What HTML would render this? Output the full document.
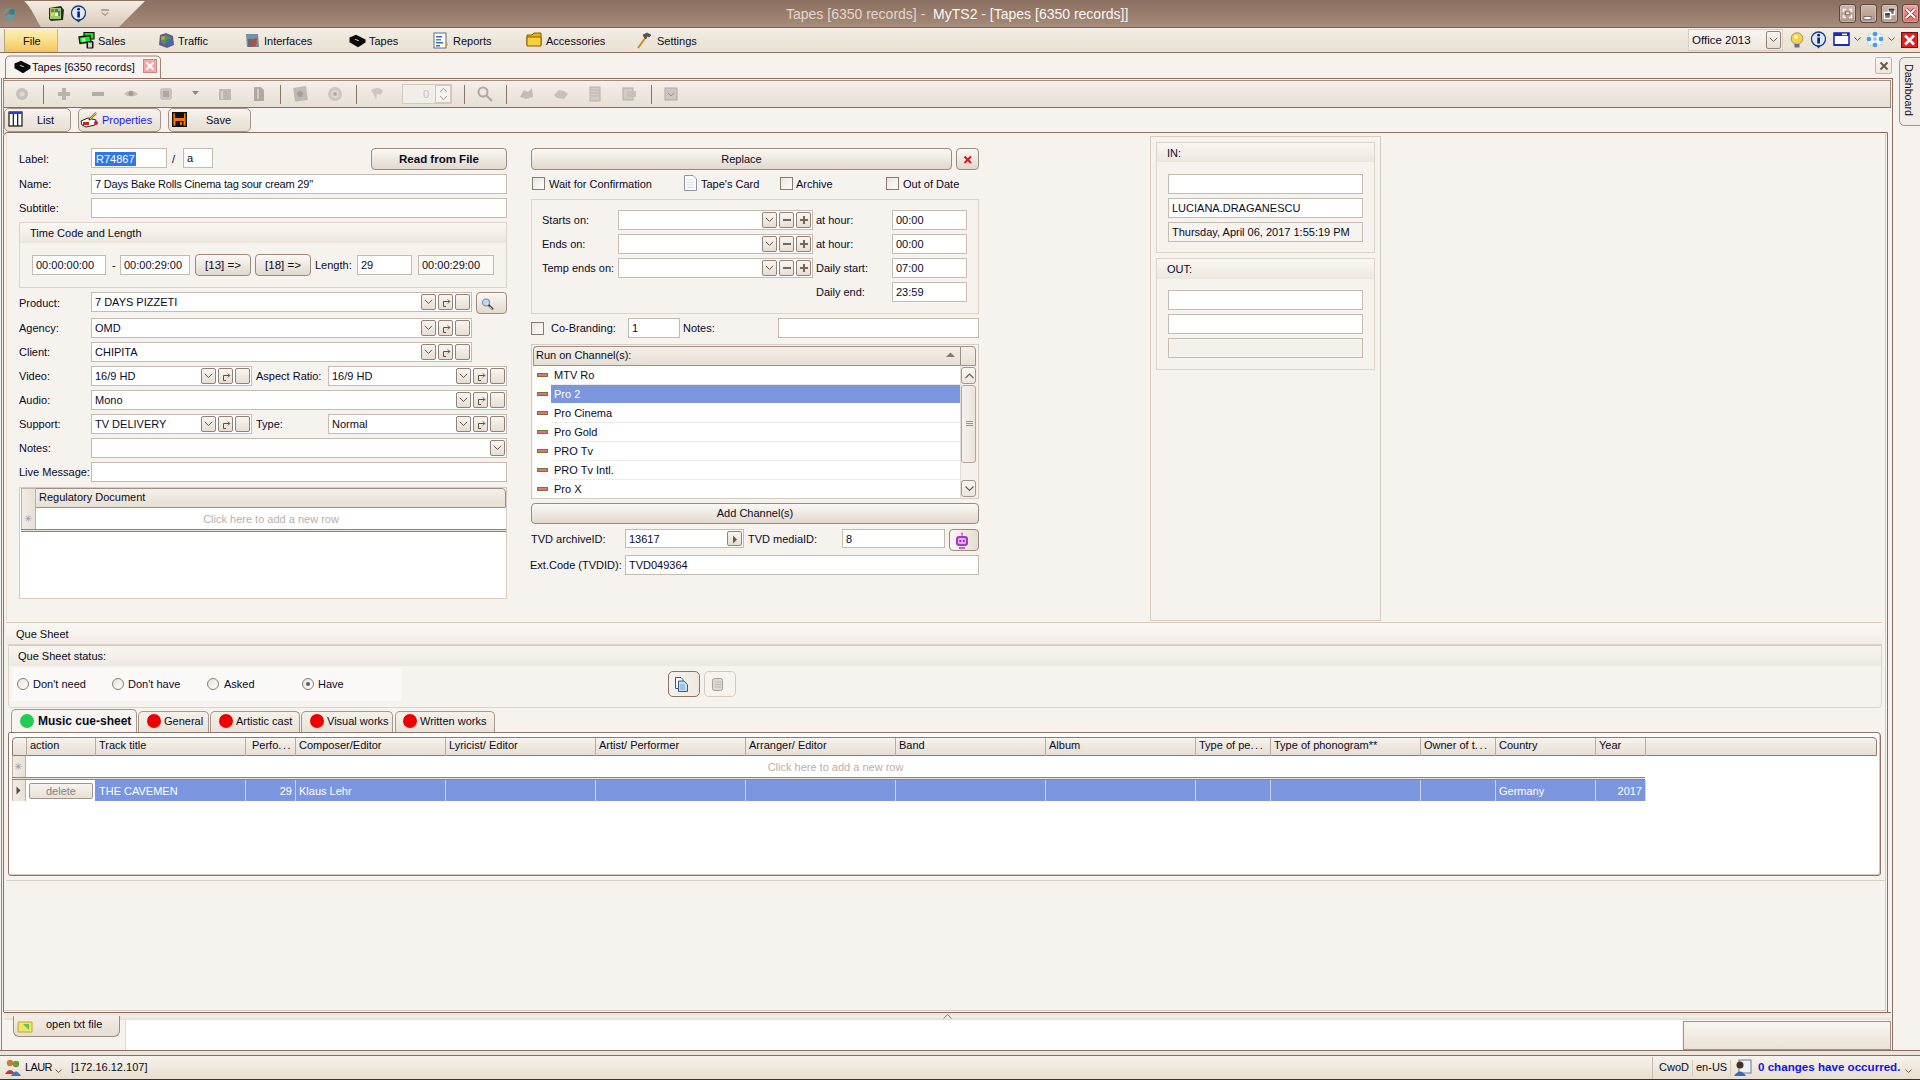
<!DOCTYPE html><html><head><meta charset="utf-8"><style>
html,body{margin:0;padding:0}
body{width:1920px;height:1080px;position:relative;overflow:hidden;background:#F6F2EE;font-family:"Liberation Sans",sans-serif;font-size:11px;color:#0a0a1e}
.a{position:absolute;box-sizing:border-box}
.t{white-space:nowrap;line-height:14px}
.inp{border:1px solid #c4bbb2;background:#fff}
.sb{border:1px solid #938279;border-radius:2px;background:linear-gradient(#f8f5f1,#e6ded4)}
.btn{border:1px solid #9c8a7e;border-radius:4px;background:linear-gradient(#fbf9f6,#ebe5dc 60%,#e2d9ce)}
.line{background:#8c6e5f}
.hdr{background:linear-gradient(#f3eee8,#e8e0d6);border:1px solid #a49183}
.grp{border:1px solid #dcd4cb}
.gh{background:linear-gradient(#faf7f3,#ece6de)}
.cb{border:1px solid #8a7b72;background:linear-gradient(135deg,#e9e4dc,#fff)}
</style></head><body>
<div class="a " style="left:0px;top:0px;width:1920px;height:28px;background:linear-gradient(#8b6f60,#9a7e6e 55%,#a88c7c);"></div>
<svg class="a" style="left:0;top:0" width="160" height="28"><defs><linearGradient id="qa" x1="0" y1="0" x2="0" y2="1"><stop offset="0" stop-color="#f4ece2"/><stop offset="1" stop-color="#d9cbbb"/></linearGradient></defs>
<path d="M24 1 H145 L119 27 H41 C36 20 32 8 24 1 Z" fill="url(#qa)"/></svg>
<svg class="a" style="left:1px;top:4px" width="16" height="20" viewBox="0 0 16 20"><circle cx="8" cy="10" r="6" fill="#5aa0a8" opacity=".8"/><path d="M3 12 L9 6 L10 9 Z" fill="#e04a2a"/><circle cx="11" cy="8" r="3" fill="#3d7d8a"/></svg>
<svg class="a" style="left:48px;top:5px" width="17" height="17" viewBox="0 0 17 17"><path d="M1 3 L13 1 L16 5 L15 15 L3 16 L1 14Z" fill="#2b2b2b"/><rect x="2" y="3" width="11" height="11" fill="#9ec96a"/><rect x="3" y="4" width="3" height="3" fill="#e24a4a"/><rect x="7" y="4" width="3" height="3" fill="#3a72c8"/><rect x="3" y="8" width="3" height="3" fill="#e5d34a"/><rect x="7" y="8" width="3" height="3" fill="#fff"/><rect x="10" y="6" width="2" height="5" fill="#4a8a3a"/></svg>
<svg class="a" style="left:70px;top:5px" width="17" height="18" viewBox="0 0 17 18"><circle cx="8.5" cy="8" r="7" fill="#dfe9f7" stroke="#1d3a8a" stroke-width="1.3"/><path d="M6 15 L8.5 17.5 L11 15" fill="#1d3a8a"/><rect x="7.3" y="6.5" width="2.6" height="6" fill="#0a1e7a"/><circle cx="8.6" cy="4.2" r="1.4" fill="#0a1e7a"/></svg>
<svg class="a" style="left:100px;top:9px" width="10" height="8" viewBox="0 0 10 8"><path d="M1 1 H9" stroke="#7a6a60" stroke-width="1"/><path d="M2 3.5 L5 6.5 L8 3.5" fill="none" stroke="#7a6a60" stroke-width="1"/></svg>
<div class="a t" style="left:786px;top:5px;font-size:14px;line-height:18px;color:#efe6df;letter-spacing:0px"><span style="color:#e3d6cc">Tapes [6350 records] - </span>&nbsp;<span style="color:#fbf7f3">MyTS2 - [Tapes [6350 records]]</span></div>
<div class="a " style="left:1839px;top:4px;width:17px;height:19px;border:1px solid #5e463c;border-radius:3px;background:linear-gradient(#cbb5aa,#b09688);box-shadow:inset 0 0 0 1px rgba(255,255,255,.25);"></div>
<div class="a " style="left:1860px;top:4px;width:17px;height:19px;border:1px solid #5e463c;border-radius:3px;background:linear-gradient(#cbb5aa,#b09688);box-shadow:inset 0 0 0 1px rgba(255,255,255,.25);"></div>
<div class="a " style="left:1881px;top:4px;width:17px;height:19px;border:1px solid #5e463c;border-radius:3px;background:linear-gradient(#cbb5aa,#b09688);box-shadow:inset 0 0 0 1px rgba(255,255,255,.25);"></div>
<div class="a " style="left:1902px;top:4px;width:17px;height:19px;border:1px solid #5e463c;border-radius:3px;background:linear-gradient(#f4a0a0,#e86a6a);box-shadow:inset 0 0 0 1px rgba(255,255,255,.25);"></div>
<svg class="a" style="left:1839px;top:4px" width="17" height="19"><path d="M4.5 8 V5.5 H7 M10 5.5 H12.5 V8 M12.5 11 V13.5 H10 M7 13.5 H4.5 V11" fill="none" stroke="#fff" stroke-width="1.5"/><rect x="6.5" y="8" width="4" height="2.5" fill="#fff" stroke="#4a3a32" stroke-width=".6"/></svg>
<svg class="a" style="left:1860px;top:4px" width="17" height="19"><rect x="4" y="12.5" width="7" height="3" fill="#fff" stroke="#4a3a32" stroke-width=".6"/></svg>
<svg class="a" style="left:1881px;top:4px" width="17" height="19"><rect x="7.5" y="4.5" width="6" height="6" fill="#8a7064" stroke="#fff" stroke-width="1.4"/><rect x="7.5" y="4.5" width="6" height="2" fill="#4a3a32"/><rect x="3.5" y="8.5" width="6" height="6" fill="#8a7064" stroke="#fff" stroke-width="1.4"/><rect x="4.2" y="9.2" width="4.6" height="2" fill="#4a3a32"/></svg>
<svg class="a" style="left:1902px;top:4px" width="17" height="19"><path d="M4 5 L13 14 M13 5 L4 14" stroke="#7a2a2a" stroke-width="3.6"/><path d="M4 5 L13 14 M13 5 L4 14" stroke="#fff" stroke-width="2.2"/></svg>
<div class="a " style="left:0px;top:27px;width:1920px;height:1px;background:#7e6456;"></div>
<div class="a " style="left:0px;top:28px;width:1920px;height:24px;background:linear-gradient(#f3efe7,#ece6da 50%,#e9e3d5);"></div>
<div class="a " style="left:0px;top:52px;width:1920px;height:1px;background:#8c6e5f;"></div>
<div class="a " style="left:4px;top:29px;width:54px;height:23px;background:linear-gradient(#fdf0b8,#f9dc86 55%,#f4c25a);border-left:1px solid #b8a080;border-right:1px solid #c9b391;"></div>
<div class="a t " style="left:23px;top:34px;">File</div>
<div class="a" style="left:78px;top:32px;line-height:0"><svg width="17" height="17" viewBox="0 0 17 17"><path d="M6 0.5 H16 V7 H6Z" fill="#22dd22" stroke="#111" stroke-width="1.2"/><path d="M1 5 L12 3.5 L13 10 L2 11.5Z" fill="#11ee11" stroke="#111" stroke-width="1.3"/><path d="M3.5 6.5 L7 6 L7.5 9 L4 9.5Z" fill="#aef0ae"/><rect x="8.5" y="9" width="7" height="7.5" rx="1" fill="#111"/><rect x="10" y="10.5" width="4" height="5" fill="#cfcfcf"/></svg></div>
<div class="a t " style="left:98px;top:34px;">Sales</div>
<div class="a" style="left:158px;top:32px;line-height:0"><svg width="17" height="17" viewBox="0 0 17 17"><path d="M2 3 L8 1 L15 4 L16 13 L9 16 L1 13Z" fill="#6a5a8a"/><path d="M3 5 L8 3 L13 6 L12 10 L6 12 L3 10Z" fill="#4f9a4a"/><circle cx="11" cy="10" r="3" fill="#3e6fb0"/><circle cx="5" cy="6" r="2" fill="#c9a040"/></svg></div>
<div class="a t " style="left:178px;top:34px;">Traffic</div>
<div class="a" style="left:244px;top:32px;line-height:0"><svg width="17" height="17" viewBox="0 0 17 17"><path d="M2 2 H14 L15 15 H3Z" fill="#7a8a9a"/><rect x="3" y="3" width="10" height="3" fill="#5a9ac8"/><path d="M6 8 L13 6 L12 14 L7 15Z" fill="#b05040"/><path d="M4 7 L8 7 L8 15 L4 15Z" fill="#6a6a6a"/></svg></div>
<div class="a t " style="left:264px;top:34px;">Interfaces</div>
<div class="a" style="left:349px;top:34px;line-height:0"><svg width="17" height="14" viewBox="0 0 17 14"><path d="M0.5 3.5 L7 0.8 L16.5 5.5 L16.5 8.5 L9 13.2 L0.5 8.2 Z" fill="#080808"/><path d="M6 5 L10 6.3 L9.3 7 L5.5 5.6Z" fill="#f4f4f4"/></svg></div>
<div class="a t " style="left:369px;top:34px;">Tapes</div>
<div class="a" style="left:433px;top:32px;line-height:0"><svg width="16" height="17" viewBox="0 0 16 17"><rect x="1" y="1" width="12" height="15" fill="#fff" stroke="#5a6a8a"/><rect x="3" y="4" width="6" height="1.5" fill="#3a6ab0"/><rect x="3" y="7" width="5" height="1.5" fill="#3aa050"/><rect x="3" y="10" width="7" height="1.5" fill="#3a6ab0"/><rect x="3" y="13" width="4" height="1.5" fill="#3a6ab0"/><path d="M12 9 L15 12 L13 16Z" fill="#d0a030"/></svg></div>
<div class="a t " style="left:453px;top:34px;">Reports</div>
<div class="a" style="left:526px;top:32px;line-height:0"><svg width="17" height="15" viewBox="0 0 17 15"><path d="M1 3 H6 L8 1 H15 V13 H1Z" fill="#e8b400" stroke="#8a5a00"/><path d="M1 5 H15 V14 H1Z" fill="#f7d23a" stroke="#8a5a00"/></svg></div>
<div class="a t " style="left:546px;top:34px;">Accessories</div>
<div class="a" style="left:636px;top:32px;line-height:0"><svg width="17" height="17" viewBox="0 0 17 17"><path d="M2 16 L10 5" stroke="#d08a2a" stroke-width="2"/><path d="M7 3 L11 1 L15 3 L13 5 L11 4 L10 7 L8 5Z" fill="#555" stroke="#333" stroke-width=".6"/></svg></div>
<div class="a t " style="left:657px;top:34px;">Settings</div>
<div class="a " style="left:1688px;top:29px;width:95px;height:22px;border:1px solid #d7cdc2;background:linear-gradient(#f7f4ee,#efe9df);"></div>
<div class="a t " style="left:1692px;top:33px;font-size:11.5px;">Office 2013</div>
<div class="a sb" style="left:1766px;top:31px;width:15px;height:18px;"><div style="position:absolute;left:2px;top:5px;line-height:0"><svg width="9" height="6" viewBox="0 0 9 6"><path d="M0.8 0.8 L4.5 4.5 L8.2 0.8" fill="none" stroke="#6b5a50" stroke-width="1"/></svg></div></div>
<svg class="a" style="left:1790px;top:32px" width="14" height="17" viewBox="0 0 14 17"><circle cx="7" cy="6.5" r="5.8" fill="#f2d34a" stroke="#9a8040" stroke-width=".8"/><circle cx="6" cy="5" r="2" fill="#fff6c0"/><rect x="4.5" y="12" width="5" height="3.5" fill="#6a6a9a"/></svg>
<svg class="a" style="left:1810px;top:31px" width="17" height="18" viewBox="0 0 17 18"><circle cx="8.5" cy="8" r="7" fill="#dfe9f7" stroke="#1d3a8a" stroke-width="1.3"/><path d="M6 14.5 L8.5 17.5 L11 14.5" fill="#1d3a8a"/><rect x="7.3" y="6.5" width="2.6" height="6" fill="#0a1e7a"/><circle cx="8.6" cy="4.2" r="1.4" fill="#0a1e7a"/></svg>
<svg class="a" style="left:1833px;top:32px" width="17" height="15" viewBox="0 0 17 15"><rect x="1" y="1" width="15" height="12" fill="#fff" stroke="#1a2ab8" stroke-width="1.6"/><rect x="1" y="1" width="15" height="3" fill="#1a2ab8"/><rect x="9" y="1.6" width="5" height="1.6" fill="#fff"/><rect x="1" y="12" width="15" height="2" fill="#1a2ab8"/></svg>
<svg class="a" style="left:1854px;top:37px" width="7" height="5"><path d="M.5 .5 L3.5 3.5 L6.5 .5" fill="none" stroke="#6b5a50"/></svg>
<svg class="a" style="left:1866px;top:31px" width="18" height="17" viewBox="0 0 18 17"><rect x="2" y="3" width="14" height="11" fill="#eef4fb" stroke="#9ab" stroke-width=".6" stroke-dasharray="1 1"/><circle cx="9" cy="3" r="2.3" fill="#4a9ae0"/><circle cx="3" cy="8" r="2.3" fill="#4a9ae0"/><circle cx="15" cy="8" r="2.3" fill="#4a9ae0"/><circle cx="9" cy="14" r="2.3" fill="#4a9ae0"/><circle cx="9" cy="8" r="1.8" fill="#8ac0f0"/></svg>
<svg class="a" style="left:1888px;top:37px" width="7" height="5"><path d="M.5 .5 L3.5 3.5 L6.5 .5" fill="none" stroke="#6b5a50"/></svg>
<svg class="a" style="left:1901px;top:32px" width="17" height="16" viewBox="0 0 17 16"><rect x=".5" y=".5" width="16" height="15" fill="#e02020" stroke="#701010"/><path d="M4 3.5 L13 12.5 M13 3.5 L4 12.5" stroke="#fff" stroke-width="2.6"/></svg>
<svg class="a" style="left:0;top:53px" width="170" height="27"><path d="M5.5 26 V8 Q5.5 3 10 3 H156 Q160.5 3 160.5 7 V26" fill="#f7f4f0" stroke="#9b8174" stroke-width="1"/></svg>
<div class="a" style="left:14px;top:60px;line-height:0"><svg width="17" height="14" viewBox="0 0 17 14"><path d="M0.5 3.5 L7 0.8 L16.5 5.5 L16.5 8.5 L9 13.2 L0.5 8.2 Z" fill="#080808"/><path d="M6 5 L10 6.3 L9.3 7 L5.5 5.6Z" fill="#f4f4f4"/></svg></div>
<div class="a t " style="left:32px;top:60px;">Tapes [6350 records]</div>
<svg class="a" style="left:143px;top:59px" width="15" height="15" viewBox="0 0 15 15"><rect x=".5" y=".5" width="13" height="13" fill="#f0a8a8" stroke="#c88"/><path d="M3.5 3.5 L10.5 10.5 M10.5 3.5 L3.5 10.5" stroke="#fff" stroke-width="2"/></svg>
<div class="a " style="left:1875px;top:57px;width:17px;height:17px;border:1px solid #c4b6ab;border-radius:2px;background:linear-gradient(#f9f6f2,#ece6de);"><svg style="position:absolute;left:3px;top:3px" width="10" height="10"><path d="M1.5 1.5 L8.5 8.5 M8.5 1.5 L1.5 8.5" stroke="#6a5a52" stroke-width="2"/></svg></div>
<svg class="a" style="left:1898px;top:57px" width="22" height="70"><path d="M22 .5 H7 Q1.5 .5 1.5 6 V63 Q1.5 68.5 7 68.5 H22" fill="#f1ece5" stroke="#a89588"/></svg>
<div class="a t" style="left:1902px;top:64px;width:14px;height:54px;"><div style="position:absolute;left:14px;top:0;transform-origin:0 0;transform:rotate(90deg);font-size:10.6px;line-height:14px">Dashboard</div></div>
<div class="a " style="left:1px;top:78px;width:1px;height:975px;background:#9b8174;"></div>
<div class="a " style="left:3px;top:79px;width:1px;height:55px;background:#9b8174;"></div>
<div class="a " style="left:3px;top:78px;width:1890px;height:1px;background:#8c6e5f;"></div>
<div class="a " style="left:1892px;top:78px;width:1px;height:973px;background:#8c6e5f;"></div>
<div class="a " style="left:1890px;top:79px;width:2px;height:972px;background:#f6f2ee;"></div>
<div class="a " style="left:4px;top:80px;width:1887px;height:27px;background:linear-gradient(#f4f0e9,#ede7dd 50%,#e6dfd3);border-top:1px solid #a38c7f;border-right:1px solid #a38c7f;"></div>
<div class="a " style="left:4px;top:107px;width:1887px;height:1px;background:#8c6e5f;"></div>
<div class="a " style="left:43px;top:85px;width:1px;height:19px;background:#8a7466;"></div>
<div class="a " style="left:280px;top:85px;width:1px;height:19px;background:#8a7466;"></div>
<div class="a " style="left:356px;top:85px;width:1px;height:19px;background:#8a7466;"></div>
<div class="a " style="left:464px;top:85px;width:1px;height:19px;background:#8a7466;"></div>
<div class="a " style="left:506px;top:85px;width:1px;height:19px;background:#8a7466;"></div>
<div class="a " style="left:651px;top:85px;width:1px;height:19px;background:#8a7466;"></div>
<svg class="a" style="left:13px;top:85px" width="18" height="18" viewBox="0 0 18 18" opacity="0.9"><circle cx="9" cy="9" r="6" fill="#c2bcb6"/><circle cx="9" cy="9" r="2.5" fill="#ddd8d2"/></svg>
<svg class="a" style="left:55px;top:85px" width="18" height="18" viewBox="0 0 18 18" opacity="0.9"><rect x="7" y="3" width="4" height="12" fill="#b5aea8"/><rect x="3" y="7" width="12" height="4" fill="#b5aea8"/></svg>
<svg class="a" style="left:89px;top:85px" width="18" height="18" viewBox="0 0 18 18" opacity="0.9"><rect x="3" y="7" width="12" height="4" fill="#ada6a0"/></svg>
<svg class="a" style="left:122px;top:85px" width="18" height="18" viewBox="0 0 18 18" opacity="0.9"><path d="M2 9 Q9 2 16 9 Q9 14 2 9Z" fill="#c0bab4"/><circle cx="9" cy="8.5" r="2.5" fill="#9a948e"/></svg>
<svg class="a" style="left:157px;top:85px" width="18" height="18" viewBox="0 0 18 18" opacity="0.9"><rect x="3" y="3" width="12" height="12" rx="3" fill="#c7c1bb"/><rect x="6" y="6" width="6" height="6" fill="#a8a29c"/></svg>
<svg class="a" style="left:192px;top:91px" width="7" height="5"><path d="M0 0 H7 L3.5 4Z" fill="#8e857e"/></svg>
<svg class="a" style="left:216px;top:85px" width="18" height="18" viewBox="0 0 18 18" opacity="0.9"><rect x="3" y="4" width="12" height="11" fill="#b9b3ad"/><rect x="5" y="6" width="2" height="8" fill="#d6d0ca"/></svg>
<svg class="a" style="left:250px;top:85px" width="18" height="18" viewBox="0 0 18 18" opacity="0.9"><path d="M4 2 H11 L14 5 V16 H4Z" fill="#aaa39d"/><rect x="7" y="4" width="2" height="10" fill="#cfc9c3"/></svg>
<svg class="a" style="left:291px;top:85px" width="18" height="18" viewBox="0 0 18 18" opacity="0.9"><rect x="3" y="2" width="13" height="14" fill="#bbb5af" transform="rotate(-8 9 9)"/><circle cx="9" cy="9" r="3" fill="#9e9892"/></svg>
<svg class="a" style="left:326px;top:85px" width="18" height="18" viewBox="0 0 18 18" opacity="0.9"><circle cx="9" cy="9" r="7" fill="#c9c3bd"/><circle cx="9" cy="9" r="4" fill="#dcd6d0"/><circle cx="9" cy="9" r="2" fill="#aca6a0"/></svg>
<svg class="a" style="left:368px;top:85px" width="18" height="18" viewBox="0 0 18 18" opacity="0.9"><path d="M3 5 Q9 1 15 5 L13 10 L9 9 L8 15 L6 10Z" fill="#cbc5bf"/></svg>
<div class="a " style="left:402px;top:84px;width:50px;height:20px;border:1px solid #d3c8bd;background:#f1ede7;"></div>
<div class="a t " style="left:423px;top:87px;color:#cdc4bc;">0</div>
<div class="a " style="left:435px;top:85px;width:16px;height:18px;border:1px solid #d3c8bd;background:#f7f4f0;"></div>
<svg class="a" style="left:439px;top:87px" width="9" height="15"><path d="M1 5 L4.5 1.5 L8 5" fill="none" stroke="#a2968c"/><path d="M1 9 L4.5 12.5 L8 9" fill="none" stroke="#a2968c"/></svg>
<svg class="a" style="left:476px;top:85px" width="18" height="18" viewBox="0 0 18 18" opacity="0.9"><circle cx="7" cy="7" r="4.5" fill="none" stroke="#aaa39d" stroke-width="2"/><path d="M10 10 L16 16" stroke="#aaa39d" stroke-width="2.2"/></svg>
<svg class="a" style="left:518px;top:85px" width="18" height="18" viewBox="0 0 18 18" opacity="0.9"><path d="M2 12 L6 5 L10 7 L14 3 L15 12 L8 14Z" fill="#bfb9b3"/></svg>
<svg class="a" style="left:552px;top:85px" width="18" height="18" viewBox="0 0 18 18" opacity="0.9"><path d="M2 10 L7 5 L12 6 L16 9 L12 14 L5 13Z" fill="#c4beb8"/></svg>
<svg class="a" style="left:586px;top:85px" width="18" height="18" viewBox="0 0 18 18" opacity="0.9"><rect x="4" y="2" width="10" height="14" fill="#d0cac4" stroke="#b0aaa4"/><path d="M5 5 H13 M5 8 H13 M5 11 H13" stroke="#b7b1ab"/></svg>
<svg class="a" style="left:620px;top:85px" width="18" height="18" viewBox="0 0 18 18" opacity="0.9"><rect x="3" y="3" width="10" height="12" fill="#cfc9c3" stroke="#aea8a2"/><rect x="7" y="6" width="9" height="6" fill="#c3bdb7"/></svg>
<svg class="a" style="left:662px;top:85px" width="18" height="18" viewBox="0 0 18 18" opacity="0.9"><rect x="3" y="3" width="12" height="12" fill="#c9c3bd" stroke="#a9a39d"/><path d="M6 8 L9 11 L12 8" fill="none" stroke="#8f8983"/></svg>
<div class="a " style="left:4px;top:108px;width:1886px;height:24px;background:#f6f2ee;"></div>
<div class="a " style="left:4px;top:108px;width:67px;height:24px;border:1px solid #a59186;border-radius:5px;background:linear-gradient(#f7f3ee,#ede7de 50%,#e7e0d5);"></div>
<div class="a " style="left:78px;top:108px;width:83px;height:24px;border:1px solid #a59186;border-radius:5px;background:linear-gradient(#f7f3ee,#ede7de 50%,#e7e0d5);"></div>
<div class="a " style="left:168px;top:108px;width:83px;height:24px;border:1px solid #a59186;border-radius:5px;background:linear-gradient(#f7f3ee,#ede7de 50%,#e7e0d5);"></div>
<svg class="a" style="left:8px;top:111px" width="15" height="16" viewBox="0 0 15 16"><rect x="1" y="1" width="13" height="14" fill="#fff" stroke="#111" stroke-width="1.2"/><rect x="1" y="1" width="13" height="2" fill="#2a3ae0"/><path d="M5.3 3 V15 M9.7 3 V15" stroke="#111" stroke-width="1.2"/></svg>
<div class="a t " style="left:37px;top:113px;">List</div>
<svg class="a" style="left:80px;top:111px" width="19" height="17" viewBox="0 0 19 17"><path d="M1 10 L8 7 L16 9 L15 14 L6 16 L2 14Z" fill="#fff" stroke="#222"/><rect x="3" y="11" width="6" height="3" fill="#d02020"/><path d="M9 9 L16 2" stroke="#333" stroke-width="2.2"/><path d="M10 8 L16 2" stroke="#f2c020" stroke-width="1.2"/><circle cx="16" cy="12" r="2" fill="#d02020"/></svg>
<div class="a t " style="left:102px;top:113px;color:#1a1af0;">Properties</div>
<svg class="a" style="left:172px;top:112px" width="15" height="15" viewBox="0 0 15 15"><rect x=".7" y=".7" width="13.6" height="13.6" fill="#f07a10" stroke="#111" stroke-width="1.4"/><rect x="3" y="1" width="9" height="5" fill="#111"/><rect x="3.5" y="9" width="8" height="5" fill="#111"/><rect x="8" y="10" width="2" height="3" fill="#f07a10"/></svg>
<div class="a t " style="left:206px;top:113px;">Save</div>
<svg class="a" style="left:0;top:131px" width="1892" height="882"><path d="M3.5 881 V6 Q3.5 1.5 8 1.5 H1887.5 V881" fill="#f6f2ee" stroke="#8c6e5f" stroke-width="1"/><path d="M1885.5 3 V879.5 H4.5" fill="none" stroke="#d6cac0" stroke-width="1"/></svg>
<div class="a t " style="left:19px;top:152px;">Label:</div>
<div class="a inp" style="left:91px;top:148px;width:76px;height:20px;"></div>
<div class="a t" style="left:95px;top:152px;background:#3176e6;color:#fff;padding:0 1px">R74867</div>
<div class="a t " style="left:172px;top:152px;">/</div>
<div class="a inp" style="left:183px;top:148px;width:30px;height:20px;background:#fff;"></div>
<div class="a t " style="left:187px;top:151px;">a</div>
<div class="a btn" style="left:371px;top:148px;width:136px;height:22px;"></div>
<div class="a t " style="left:371px;top:152px;width:136px;text-align:center;font-weight:bold;font-size:11.5px;">Read from File</div>
<div class="a t " style="left:19px;top:177px;">Name:</div>
<div class="a inp" style="left:91px;top:174px;width:416px;height:20px;background:#fff;"></div>
<div class="a t " style="left:95px;top:177px;letter-spacing:-0.2px;">7 Days Bake Rolls Cinema tag sour cream 29"</div>
<div class="a t " style="left:19px;top:201px;">Subtitle:</div>
<div class="a inp" style="left:91px;top:198px;width:416px;height:20px;background:#fff;"></div>
<div class="a grp" style="left:19px;top:222px;width:488px;height:66px;"></div>
<div class="a gh" style="left:20px;top:223px;width:486px;height:20px;"></div>
<div class="a t " style="left:30px;top:226px;">Time Code and Length</div>
<div class="a inp" style="left:32px;top:255px;width:74px;height:20px;background:#fff;"></div>
<div class="a t " style="left:36px;top:258px;">00:00:00:00</div>
<div class="a t " style="left:112px;top:258px;">-</div>
<div class="a inp" style="left:120px;top:255px;width:70px;height:20px;background:#fff;"></div>
<div class="a t " style="left:124px;top:258px;">00:00:29:00</div>
<div class="a btn" style="left:195px;top:254px;width:56px;height:22px;"></div>
<div class="a t " style="left:195px;top:258px;width:56px;text-align:center;font-size:11.5px;">[13] =&gt;</div>
<div class="a btn" style="left:255px;top:254px;width:56px;height:22px;"></div>
<div class="a t " style="left:255px;top:258px;width:56px;text-align:center;font-size:11.5px;">[18] =&gt;</div>
<div class="a t " style="left:315px;top:258px;">Length:</div>
<div class="a inp" style="left:357px;top:255px;width:55px;height:20px;background:#fff;"></div>
<div class="a t " style="left:361px;top:258px;">29</div>
<div class="a inp" style="left:418px;top:255px;width:76px;height:20px;background:#fbf9f6;"></div>
<div class="a t " style="left:422px;top:258px;">00:00:29:00</div>
<div class="a t " style="left:19px;top:296px;">Product:</div>
<div class="a inp" style="left:91px;top:292px;width:381px;height:20px;background:#fff;"></div>
<div class="a t " style="left:95px;top:295px;">7 DAYS PIZZETI</div>
<div class="a sb" style="left:421px;top:294px;width:15px;height:16px;"><div style="position:absolute;left:2px;top:4px;line-height:0"><svg width="9" height="6" viewBox="0 0 9 6"><path d="M0.8 0.8 L4.5 4.5 L8.2 0.8" fill="none" stroke="#6b5a50" stroke-width="1"/></svg></div></div>
<div class="a sb" style="left:438px;top:294px;width:15px;height:16px;"><svg style="position:absolute;left:2px;top:2px" width="11" height="11" viewBox="0 0 11 11"><path d="M4.5 4.5 H2.5 V9.5 H5" fill="none" stroke="#5e4e46" stroke-width="1"/><path d="M3.5 4.5 H8.5" stroke="#5e4e46" stroke-width="1"/><path d="M6.8 2.5 L8.8 4.5 L6.8 6.5" fill="none" stroke="#5e4e46" stroke-width="1"/></svg></div>
<div class="a sb" style="left:455px;top:294px;width:15px;height:16px;"></div>
<div class="a btn" style="left:476px;top:292px;width:31px;height:22px;"><svg style="position:absolute;left:4px;top:5px" width="14" height="14" viewBox="0 0 14 14"><circle cx="5" cy="4.5" r="3.5" fill="#bcdcf7" stroke="#6a8ab0" stroke-width="1.1"/><path d="M7.5 7 L12 11.5" stroke="#3a3a30" stroke-width="2"/><path d="M8.5 8.5 L11.5 11.5" stroke="#e8d020" stroke-width="1"/></svg></div>
<div class="a t " style="left:19px;top:321px;">Agency:</div>
<div class="a inp" style="left:91px;top:318px;width:381px;height:20px;background:#fff;"></div>
<div class="a t " style="left:95px;top:321px;">OMD</div>
<div class="a sb" style="left:421px;top:320px;width:15px;height:16px;"><div style="position:absolute;left:2px;top:4px;line-height:0"><svg width="9" height="6" viewBox="0 0 9 6"><path d="M0.8 0.8 L4.5 4.5 L8.2 0.8" fill="none" stroke="#6b5a50" stroke-width="1"/></svg></div></div>
<div class="a sb" style="left:438px;top:320px;width:15px;height:16px;"><svg style="position:absolute;left:2px;top:2px" width="11" height="11" viewBox="0 0 11 11"><path d="M4.5 4.5 H2.5 V9.5 H5" fill="none" stroke="#5e4e46" stroke-width="1"/><path d="M3.5 4.5 H8.5" stroke="#5e4e46" stroke-width="1"/><path d="M6.8 2.5 L8.8 4.5 L6.8 6.5" fill="none" stroke="#5e4e46" stroke-width="1"/></svg></div>
<div class="a sb" style="left:455px;top:320px;width:15px;height:16px;"></div>
<div class="a t " style="left:19px;top:345px;">Client:</div>
<div class="a inp" style="left:91px;top:342px;width:381px;height:20px;background:#fff;"></div>
<div class="a t " style="left:95px;top:345px;">CHIPITA</div>
<div class="a sb" style="left:421px;top:344px;width:15px;height:16px;"><div style="position:absolute;left:2px;top:4px;line-height:0"><svg width="9" height="6" viewBox="0 0 9 6"><path d="M0.8 0.8 L4.5 4.5 L8.2 0.8" fill="none" stroke="#6b5a50" stroke-width="1"/></svg></div></div>
<div class="a sb" style="left:438px;top:344px;width:15px;height:16px;"><svg style="position:absolute;left:2px;top:2px" width="11" height="11" viewBox="0 0 11 11"><path d="M4.5 4.5 H2.5 V9.5 H5" fill="none" stroke="#5e4e46" stroke-width="1"/><path d="M3.5 4.5 H8.5" stroke="#5e4e46" stroke-width="1"/><path d="M6.8 2.5 L8.8 4.5 L6.8 6.5" fill="none" stroke="#5e4e46" stroke-width="1"/></svg></div>
<div class="a sb" style="left:455px;top:344px;width:15px;height:16px;"></div>
<div class="a t " style="left:19px;top:369px;">Video:</div>
<div class="a inp" style="left:91px;top:366px;width:161px;height:20px;background:#fff;"></div>
<div class="a t " style="left:95px;top:369px;">16/9 HD</div>
<div class="a sb" style="left:201px;top:368px;width:15px;height:16px;"><div style="position:absolute;left:2px;top:4px;line-height:0"><svg width="9" height="6" viewBox="0 0 9 6"><path d="M0.8 0.8 L4.5 4.5 L8.2 0.8" fill="none" stroke="#6b5a50" stroke-width="1"/></svg></div></div>
<div class="a sb" style="left:218px;top:368px;width:15px;height:16px;"><svg style="position:absolute;left:2px;top:2px" width="11" height="11" viewBox="0 0 11 11"><path d="M4.5 4.5 H2.5 V9.5 H5" fill="none" stroke="#5e4e46" stroke-width="1"/><path d="M3.5 4.5 H8.5" stroke="#5e4e46" stroke-width="1"/><path d="M6.8 2.5 L8.8 4.5 L6.8 6.5" fill="none" stroke="#5e4e46" stroke-width="1"/></svg></div>
<div class="a sb" style="left:235px;top:368px;width:15px;height:16px;"></div>
<div class="a t " style="left:256px;top:369px;">Aspect Ratio:</div>
<div class="a inp" style="left:328px;top:366px;width:179px;height:20px;background:#fff;"></div>
<div class="a t " style="left:332px;top:369px;">16/9 HD</div>
<div class="a sb" style="left:456px;top:368px;width:15px;height:16px;"><div style="position:absolute;left:2px;top:4px;line-height:0"><svg width="9" height="6" viewBox="0 0 9 6"><path d="M0.8 0.8 L4.5 4.5 L8.2 0.8" fill="none" stroke="#6b5a50" stroke-width="1"/></svg></div></div>
<div class="a sb" style="left:473px;top:368px;width:15px;height:16px;"><svg style="position:absolute;left:2px;top:2px" width="11" height="11" viewBox="0 0 11 11"><path d="M4.5 4.5 H2.5 V9.5 H5" fill="none" stroke="#5e4e46" stroke-width="1"/><path d="M3.5 4.5 H8.5" stroke="#5e4e46" stroke-width="1"/><path d="M6.8 2.5 L8.8 4.5 L6.8 6.5" fill="none" stroke="#5e4e46" stroke-width="1"/></svg></div>
<div class="a sb" style="left:490px;top:368px;width:15px;height:16px;"></div>
<div class="a t " style="left:19px;top:393px;">Audio:</div>
<div class="a inp" style="left:91px;top:390px;width:416px;height:20px;background:#fff;"></div>
<div class="a t " style="left:95px;top:393px;">Mono</div>
<div class="a sb" style="left:456px;top:392px;width:15px;height:16px;"><div style="position:absolute;left:2px;top:4px;line-height:0"><svg width="9" height="6" viewBox="0 0 9 6"><path d="M0.8 0.8 L4.5 4.5 L8.2 0.8" fill="none" stroke="#6b5a50" stroke-width="1"/></svg></div></div>
<div class="a sb" style="left:473px;top:392px;width:15px;height:16px;"><svg style="position:absolute;left:2px;top:2px" width="11" height="11" viewBox="0 0 11 11"><path d="M4.5 4.5 H2.5 V9.5 H5" fill="none" stroke="#5e4e46" stroke-width="1"/><path d="M3.5 4.5 H8.5" stroke="#5e4e46" stroke-width="1"/><path d="M6.8 2.5 L8.8 4.5 L6.8 6.5" fill="none" stroke="#5e4e46" stroke-width="1"/></svg></div>
<div class="a sb" style="left:490px;top:392px;width:15px;height:16px;"></div>
<div class="a t " style="left:19px;top:417px;">Support:</div>
<div class="a inp" style="left:91px;top:414px;width:161px;height:20px;background:#fff;"></div>
<div class="a t " style="left:95px;top:417px;">TV DELIVERY</div>
<div class="a sb" style="left:201px;top:416px;width:15px;height:16px;"><div style="position:absolute;left:2px;top:4px;line-height:0"><svg width="9" height="6" viewBox="0 0 9 6"><path d="M0.8 0.8 L4.5 4.5 L8.2 0.8" fill="none" stroke="#6b5a50" stroke-width="1"/></svg></div></div>
<div class="a sb" style="left:218px;top:416px;width:15px;height:16px;"><svg style="position:absolute;left:2px;top:2px" width="11" height="11" viewBox="0 0 11 11"><path d="M4.5 4.5 H2.5 V9.5 H5" fill="none" stroke="#5e4e46" stroke-width="1"/><path d="M3.5 4.5 H8.5" stroke="#5e4e46" stroke-width="1"/><path d="M6.8 2.5 L8.8 4.5 L6.8 6.5" fill="none" stroke="#5e4e46" stroke-width="1"/></svg></div>
<div class="a sb" style="left:235px;top:416px;width:15px;height:16px;"></div>
<div class="a t " style="left:256px;top:417px;">Type:</div>
<div class="a inp" style="left:328px;top:414px;width:179px;height:20px;background:#fff;"></div>
<div class="a t " style="left:332px;top:417px;">Normal</div>
<div class="a sb" style="left:456px;top:416px;width:15px;height:16px;"><div style="position:absolute;left:2px;top:4px;line-height:0"><svg width="9" height="6" viewBox="0 0 9 6"><path d="M0.8 0.8 L4.5 4.5 L8.2 0.8" fill="none" stroke="#6b5a50" stroke-width="1"/></svg></div></div>
<div class="a sb" style="left:473px;top:416px;width:15px;height:16px;"><svg style="position:absolute;left:2px;top:2px" width="11" height="11" viewBox="0 0 11 11"><path d="M4.5 4.5 H2.5 V9.5 H5" fill="none" stroke="#5e4e46" stroke-width="1"/><path d="M3.5 4.5 H8.5" stroke="#5e4e46" stroke-width="1"/><path d="M6.8 2.5 L8.8 4.5 L6.8 6.5" fill="none" stroke="#5e4e46" stroke-width="1"/></svg></div>
<div class="a sb" style="left:490px;top:416px;width:15px;height:16px;"></div>
<div class="a t " style="left:19px;top:441px;">Notes:</div>
<div class="a inp" style="left:91px;top:438px;width:416px;height:20px;background:#fff;"></div>
<div class="a sb" style="left:490px;top:440px;width:15px;height:16px;"><div style="position:absolute;left:2px;top:4px;line-height:0"><svg width="9" height="6" viewBox="0 0 9 6"><path d="M0.8 0.8 L4.5 4.5 L8.2 0.8" fill="none" stroke="#6b5a50" stroke-width="1"/></svg></div></div>
<div class="a t " style="left:19px;top:465px;">Live Message:</div>
<div class="a inp" style="left:91px;top:462px;width:416px;height:20px;background:#fff;"></div>
<div class="a " style="left:19px;top:487px;width:488px;height:112px;border:1px solid #d4cbc2;background:#fff;"></div>
<div class="a " style="left:21px;top:488px;width:485px;height:20px;border:1px solid #a08e82;border-radius:4px 4px 0 0;background:linear-gradient(#f4efe8,#e6dfd4);"></div>
<div class="a " style="left:21px;top:488px;width:15px;height:42px;border:1px solid #c0b1a6;background:linear-gradient(90deg,#f1ece5,#e7e0d6);"></div>
<div class="a t " style="left:39px;top:490px;">Regulatory Document</div>
<div class="a " style="left:36px;top:508px;width:470px;height:22px;background:#fff;"></div>
<div class="a t" style="left:24px;top:512px;color:#a09890;font-size:10px">&#10035;</div>
<div class="a t " style="left:36px;top:512px;width:470px;text-align:center;color:#b8b0a8;">Click here to add a new row</div>
<div class="a " style="left:21px;top:529px;width:485px;height:3px;border-top:1px solid #9e7f70;border-bottom:1px solid #9e7f70;background:#e9e2d9;"></div>
<div class="a btn" style="left:531px;top:148px;width:421px;height:22px;"></div>
<div class="a t " style="left:531px;top:152px;width:421px;text-align:center;">Replace</div>
<div class="a btn" style="left:956px;top:148px;width:23px;height:22px;"><svg style="position:absolute;left:6px;top:6px" width="10" height="10"><path d="M1.5 1.5 L8 8 M8 1.5 L1.5 8" stroke="#e01010" stroke-width="1.8"/></svg></div>
<div class="a cb" style="left:532px;top:177px;width:13px;height:13px;"></div>
<div class="a t " style="left:549px;top:177px;">Wait for Confirmation</div>
<svg class="a" style="left:684px;top:175px" width="13" height="16" viewBox="0 0 13 16"><path d="M.5 .5 H9 L12.5 4 V15.5 H.5Z" fill="#fff" stroke="#8a94a8"/><path d="M2.5 5 H10 M2.5 7.5 H10 M2.5 10 H10 M2.5 12.5 H10" stroke="#c9d0dc" stroke-width=".8"/></svg>
<div class="a t " style="left:701px;top:177px;">Tape&#39;s Card</div>
<div class="a cb" style="left:780px;top:177px;width:13px;height:13px;"></div>
<div class="a t " style="left:796px;top:177px;">Archive</div>
<div class="a cb" style="left:886px;top:177px;width:13px;height:13px;"></div>
<div class="a t " style="left:903px;top:177px;">Out of Date</div>
<div class="a grp" style="left:531px;top:199px;width:448px;height:115px;"></div>
<div class="a t " style="left:542px;top:213px;">Starts on:</div>
<div class="a inp" style="left:618px;top:210px;width:195px;height:20px;background:#fff;"></div>
<div class="a sb" style="left:762px;top:212px;width:15px;height:16px;"><div style="position:absolute;left:2px;top:4px;line-height:0"><svg width="9" height="6" viewBox="0 0 9 6"><path d="M0.8 0.8 L4.5 4.5 L8.2 0.8" fill="none" stroke="#6b5a50" stroke-width="1"/></svg></div></div>
<div class="a sb" style="left:779px;top:212px;width:15px;height:16px;"><div style="position:absolute;left:3px;top:6px;width:8px;height:2px;background:#7a6458"></div></div>
<div class="a sb" style="left:796px;top:212px;width:15px;height:16px;"><div style="position:absolute;left:3px;top:6px;width:8px;height:2px;background:#7a6458"></div><div style="position:absolute;left:6px;top:3px;width:2px;height:8px;background:#7a6458"></div></div>
<div class="a t " style="left:816px;top:213px;">at hour:</div>
<div class="a inp" style="left:892px;top:210px;width:75px;height:20px;background:#fff;"></div>
<div class="a t " style="left:896px;top:213px;">00:00</div>
<div class="a t " style="left:542px;top:237px;">Ends on:</div>
<div class="a inp" style="left:618px;top:234px;width:195px;height:20px;background:#fff;"></div>
<div class="a sb" style="left:762px;top:236px;width:15px;height:16px;"><div style="position:absolute;left:2px;top:4px;line-height:0"><svg width="9" height="6" viewBox="0 0 9 6"><path d="M0.8 0.8 L4.5 4.5 L8.2 0.8" fill="none" stroke="#6b5a50" stroke-width="1"/></svg></div></div>
<div class="a sb" style="left:779px;top:236px;width:15px;height:16px;"><div style="position:absolute;left:3px;top:6px;width:8px;height:2px;background:#7a6458"></div></div>
<div class="a sb" style="left:796px;top:236px;width:15px;height:16px;"><div style="position:absolute;left:3px;top:6px;width:8px;height:2px;background:#7a6458"></div><div style="position:absolute;left:6px;top:3px;width:2px;height:8px;background:#7a6458"></div></div>
<div class="a t " style="left:816px;top:237px;">at hour:</div>
<div class="a inp" style="left:892px;top:234px;width:75px;height:20px;background:#fff;"></div>
<div class="a t " style="left:896px;top:237px;">00:00</div>
<div class="a t " style="left:542px;top:261px;">Temp ends on:</div>
<div class="a inp" style="left:618px;top:258px;width:195px;height:20px;background:#fff;"></div>
<div class="a sb" style="left:762px;top:260px;width:15px;height:16px;"><div style="position:absolute;left:2px;top:4px;line-height:0"><svg width="9" height="6" viewBox="0 0 9 6"><path d="M0.8 0.8 L4.5 4.5 L8.2 0.8" fill="none" stroke="#6b5a50" stroke-width="1"/></svg></div></div>
<div class="a sb" style="left:779px;top:260px;width:15px;height:16px;"><div style="position:absolute;left:3px;top:6px;width:8px;height:2px;background:#7a6458"></div></div>
<div class="a sb" style="left:796px;top:260px;width:15px;height:16px;"><div style="position:absolute;left:3px;top:6px;width:8px;height:2px;background:#7a6458"></div><div style="position:absolute;left:6px;top:3px;width:2px;height:8px;background:#7a6458"></div></div>
<div class="a t " style="left:816px;top:261px;">Daily start:</div>
<div class="a inp" style="left:892px;top:258px;width:75px;height:20px;background:#fff;"></div>
<div class="a t " style="left:896px;top:261px;">07:00</div>
<div class="a t " style="left:816px;top:285px;">Daily end:</div>
<div class="a inp" style="left:892px;top:282px;width:75px;height:20px;background:#fff;"></div>
<div class="a t " style="left:896px;top:285px;">23:59</div>
<div class="a cb" style="left:531px;top:322px;width:13px;height:13px;"></div>
<div class="a t " style="left:551px;top:321px;">Co-Branding:</div>
<div class="a inp" style="left:628px;top:318px;width:52px;height:20px;background:#fff;"></div>
<div class="a t " style="left:632px;top:321px;">1</div>
<div class="a t " style="left:683px;top:321px;">Notes:</div>
<div class="a inp" style="left:778px;top:318px;width:201px;height:20px;background:#fff;"></div>
<div class="a " style="left:531px;top:344px;width:448px;height:155px;border:1px solid #d6cec5;"></div>
<div class="a " style="left:533px;top:346px;width:427px;height:20px;border:1px solid #a08e82;border-right:none;border-radius:4px 0 0 0;background:linear-gradient(#f4efe8,#e6dfd4);"></div>
<div class="a " style="left:960px;top:346px;width:16px;height:20px;border:1px solid #a08e82;border-radius:0 4px 0 0;background:linear-gradient(#f4efe8,#e6dfd4);"></div>
<div class="a t " style="left:536px;top:348px;">Run on Channel(s):</div>
<svg class="a" style="left:946px;top:352px" width="9" height="6"><path d="M0 5 L4.5 .5 L9 5Z" fill="#8a7a70"/></svg>
<div class="a " style="left:533px;top:366px;width:427px;height:132px;background:#fff;"></div>
<div class="a " style="left:551px;top:384px;width:409px;height:1px;background:#ecebea;"></div>
<div class="a " style="left:537px;top:373px;width:11px;height:4px;background:#f06a88;border:1px solid #6f7d22;"></div>
<div class="a t " style="left:554px;top:368px;">MTV Ro</div>
<div class="a " style="left:551px;top:385px;width:409px;height:18px;background:#7b96df;"></div>
<div class="a " style="left:537px;top:392px;width:11px;height:4px;background:#f06a88;border:1px solid #6f7d22;"></div>
<div class="a t " style="left:554px;top:387px;color:#fff;">Pro 2</div>
<div class="a " style="left:551px;top:422px;width:409px;height:1px;background:#ecebea;"></div>
<div class="a " style="left:537px;top:411px;width:11px;height:4px;background:#f06a88;border:1px solid #6f7d22;"></div>
<div class="a t " style="left:554px;top:406px;">Pro Cinema</div>
<div class="a " style="left:551px;top:441px;width:409px;height:1px;background:#ecebea;"></div>
<div class="a " style="left:537px;top:430px;width:11px;height:4px;background:#f06a88;border:1px solid #6f7d22;"></div>
<div class="a t " style="left:554px;top:425px;">Pro Gold</div>
<div class="a " style="left:551px;top:460px;width:409px;height:1px;background:#ecebea;"></div>
<div class="a " style="left:537px;top:449px;width:11px;height:4px;background:#f06a88;border:1px solid #6f7d22;"></div>
<div class="a t " style="left:554px;top:444px;">PRO Tv</div>
<div class="a " style="left:551px;top:479px;width:409px;height:1px;background:#ecebea;"></div>
<div class="a " style="left:537px;top:468px;width:11px;height:4px;background:#f06a88;border:1px solid #6f7d22;"></div>
<div class="a t " style="left:554px;top:463px;">PRO Tv Intl.</div>
<div class="a " style="left:537px;top:487px;width:11px;height:4px;background:#f06a88;border:1px solid #6f7d22;"></div>
<div class="a t " style="left:554px;top:482px;">Pro X</div>
<div class="a " style="left:960px;top:366px;width:17px;height:132px;background:#f4f1ec;border-left:1px solid #e4ddd5;"></div>
<div class="a " style="left:961px;top:367px;width:15px;height:17px;border:1px solid #a3958b;border-radius:3px;background:linear-gradient(#fbf9f6,#ebe5dc);"><svg style="position:absolute;left:3px;top:5px" width="9" height="6"><path d="M.5 5 L4.5 1 L8.5 5" fill="none" stroke="#6b5a50" stroke-width="1.1"/></svg></div>
<div class="a " style="left:961px;top:385px;width:15px;height:78px;border:1px solid #b3a59b;border-radius:3px;background:linear-gradient(90deg,#f5f2ee,#e9e3db);"><svg style="position:absolute;left:3px;top:35px" width="9" height="6"><path d="M1 .5 H8 M1 2.5 H8 M1 4.5 H8" stroke="#8a7a70" stroke-width=".8"/></svg></div>
<div class="a " style="left:961px;top:480px;width:15px;height:17px;border:1px solid #a3958b;border-radius:3px;background:linear-gradient(#fbf9f6,#ebe5dc);"><svg style="position:absolute;left:3px;top:5px" width="9" height="6"><path d="M.5 .5 L4.5 4.5 L8.5 .5" fill="none" stroke="#6b5a50" stroke-width="1.1"/></svg></div>
<div class="a btn" style="left:531px;top:503px;width:448px;height:21px;"></div>
<div class="a t " style="left:531px;top:506px;width:448px;text-align:center;">Add Channel(s)</div>
<div class="a t " style="left:531px;top:532px;">TVD archiveID:</div>
<div class="a inp" style="left:625px;top:529px;width:119px;height:19px;background:#fff;"></div>
<div class="a t " style="left:629px;top:532px;">13617</div>
<div class="a sb" style="left:727px;top:531px;width:15px;height:15px;"><svg style="position:absolute;left:4px;top:3px" width="6" height="9"><path d="M1 .5 L5 4.5 L1 8.5Z" fill="#6b5a50"/></svg></div>
<div class="a t " style="left:748px;top:532px;">TVD mediaID:</div>
<div class="a inp" style="left:842px;top:529px;width:103px;height:19px;background:#fff;"></div>
<div class="a t " style="left:846px;top:532px;">8</div>
<div class="a btn" style="left:949px;top:529px;width:30px;height:22px;background:linear-gradient(90deg,#f9f6f2,#e6ded3);"><svg style="position:absolute;left:5px;top:2px" width="14" height="18" viewBox="0 0 14 18"><path d="M7 1 V4" stroke="#b050c0" stroke-width="1"/><circle cx="7" cy="1.5" r="1" fill="#c060d0"/><rect x="1" y="4" width="12" height="10" rx="3" fill="#a838c0"/><rect x="3" y="6" width="8" height="6" rx="1.5" fill="#e9a6f2"/><circle cx="5.3" cy="9" r="1.1" fill="#8a2aa0"/><circle cx="8.7" cy="9" r="1.1" fill="#8a2aa0"/><path d="M4 16 H10" stroke="#a040b8" stroke-width="1.5"/></svg></div>
<div class="a t " style="left:530px;top:558px;">Ext.Code (TVDID):</div>
<div class="a inp" style="left:625px;top:555px;width:354px;height:20px;background:#fff;"></div>
<div class="a t " style="left:629px;top:558px;">TVD049364</div>
<div class="a " style="left:1150px;top:136px;width:231px;height:485px;border:1px solid #d6cec5;"></div>
<div class="a grp" style="left:1156px;top:142px;width:219px;height:111px;"></div>
<div class="a gh" style="left:1157px;top:143px;width:217px;height:19px;"></div>
<div class="a t " style="left:1167px;top:146px;">IN:</div>
<div class="a inp" style="left:1168px;top:174px;width:195px;height:20px;background:#fff;"></div>
<div class="a inp" style="left:1168px;top:198px;width:195px;height:20px;background:#fff;"></div>
<div class="a t " style="left:1172px;top:201px;">LUCIANA.DRAGANESCU</div>
<div class="a inp" style="left:1168px;top:222px;width:195px;height:20px;background:#f7f3ee;"></div>
<div class="a t " style="left:1172px;top:225px;">Thursday, April 06, 2017 1:55:19 PM</div>
<div class="a grp" style="left:1156px;top:258px;width:219px;height:112px;"></div>
<div class="a gh" style="left:1157px;top:259px;width:217px;height:20px;"></div>
<div class="a t " style="left:1167px;top:262px;">OUT:</div>
<div class="a inp" style="left:1168px;top:290px;width:195px;height:20px;background:#fff;"></div>
<div class="a inp" style="left:1168px;top:314px;width:195px;height:20px;background:#fff;"></div>
<div class="a inp" style="left:1168px;top:338px;width:195px;height:20px;background:#f4f0eb;"></div>
<div class="a " style="left:6px;top:134px;width:1px;height:486px;background:#e3dbd2;"></div>
<div class="a " style="left:6px;top:622px;width:1876px;height:1px;background:#d6cabe;"></div>
<div class="a " style="left:6px;top:623px;width:1876px;height:22px;background:linear-gradient(#faf8f4,#f1ebe4);"></div>
<div class="a t " style="left:16px;top:627px;">Que Sheet</div>
<div class="a " style="left:8px;top:644px;width:1874px;height:64px;border:1px solid #dcd3c9;border-radius:0 0 4px 4px;"></div>
<div class="a " style="left:9px;top:645px;width:1872px;height:21px;background:linear-gradient(#f8f5f1,#eee8e0);border-top:1px solid #d4c8bc;"></div>
<div class="a t " style="left:18px;top:649px;">Que Sheet status:</div>
<div class="a " style="left:12px;top:668px;width:390px;height:33px;background:#fbf9f7;"></div>
<div class="a " style="left:17px;top:678px;width:12px;height:12px;border:1px solid #8a7d74;border-radius:50%;background:linear-gradient(135deg,#e8e2da,#fff);"></div>
<div class="a t " style="left:33px;top:677px;">Don't need</div>
<div class="a " style="left:112px;top:678px;width:12px;height:12px;border:1px solid #8a7d74;border-radius:50%;background:linear-gradient(135deg,#e8e2da,#fff);"></div>
<div class="a t " style="left:128px;top:677px;">Don't have</div>
<div class="a " style="left:207px;top:678px;width:12px;height:12px;border:1px solid #8a7d74;border-radius:50%;background:linear-gradient(135deg,#e8e2da,#fff);"></div>
<div class="a t " style="left:224px;top:677px;">Asked</div>
<div class="a " style="left:302px;top:678px;width:12px;height:12px;border:1px solid #8a7d74;border-radius:50%;background:linear-gradient(135deg,#e8e2da,#fff);"><div style="position:absolute;left:3px;top:3px;width:4px;height:4px;border-radius:50%;background:#6a5a52"></div></div>
<div class="a t " style="left:318px;top:677px;">Have</div>
<div class="a btn" style="left:668px;top:671px;width:32px;height:26px;border-radius:5px;border-color:#8a7468;background:linear-gradient(90deg,#f7f3ee,#eee8e0);"><svg style="position:absolute;left:5px;top:4px" width="15" height="17" viewBox="0 0 15 17"><path d="M1.5 1.5 H7 L9 3.5 V12.5 H1.5Z" fill="#fff" stroke="#3a5a90"/><path d="M4.5 5 H10 L13.5 8.5 V15.5 H4.5Z" fill="#bfe0f7" stroke="#3a5a90"/><path d="M6 9 H11 M6 11 H11 M6 13 H11" stroke="#6a8ac0" stroke-width=".7"/></svg></div>
<div class="a btn" style="left:704px;top:671px;width:32px;height:26px;border-radius:5px;border-color:#d3c9bf;background:#f7f4f0;"><svg style="position:absolute;left:6px;top:4px" width="15" height="17" viewBox="0 0 15 17"><rect x="1.5" y="2.5" width="10" height="12" rx="2" fill="#dcd7d2" stroke="#a8a29c"/><path d="M4 6 H10 M4 8.5 H10 M4 11 H10" stroke="#b5afa9" stroke-width=".8"/></svg></div>
<div class="a " style="left:138px;top:711px;width:71px;height:22px;border:1px solid #a99689;border-bottom:none;border-radius:5px 5px 0 0;background:linear-gradient(#f5f1eb,#e9e2d8);"></div>
<div class="a " style="left:147px;top:714px;width:14px;height:14px;border-radius:50%;background:#ee0000;"></div>
<div class="a t " style="left:164px;top:714px;">General</div>
<div class="a " style="left:210px;top:711px;width:90px;height:22px;border:1px solid #a99689;border-bottom:none;border-radius:5px 5px 0 0;background:linear-gradient(#f5f1eb,#e9e2d8);"></div>
<div class="a " style="left:219px;top:714px;width:14px;height:14px;border-radius:50%;background:#ee0000;"></div>
<div class="a t " style="left:236px;top:714px;">Artistic cast</div>
<div class="a " style="left:301px;top:711px;width:92px;height:22px;border:1px solid #a99689;border-bottom:none;border-radius:5px 5px 0 0;background:linear-gradient(#f5f1eb,#e9e2d8);"></div>
<div class="a " style="left:310px;top:714px;width:14px;height:14px;border-radius:50%;background:#ee0000;"></div>
<div class="a t " style="left:327px;top:714px;">Visual works</div>
<div class="a " style="left:395px;top:711px;width:100px;height:22px;border:1px solid #a99689;border-bottom:none;border-radius:5px 5px 0 0;background:linear-gradient(#f5f1eb,#e9e2d8);"></div>
<div class="a " style="left:403px;top:714px;width:14px;height:14px;border-radius:50%;background:#ee0000;"></div>
<div class="a t " style="left:420px;top:714px;">Written works</div>
<div class="a " style="left:11px;top:709px;width:126px;height:24px;border:1px solid #a99689;border-bottom:none;border-radius:5px 5px 0 0;background:#f8f5f1;"></div>
<div class="a " style="left:20px;top:714px;width:14px;height:14px;border-radius:50%;background:#22cc55;"></div>
<div class="a t " style="left:38px;top:714px;font-weight:bold;font-size:12px;">Music cue-sheet</div>
<div class="a " style="left:6px;top:880px;width:1880px;height:1px;background:#d8cfc6;"></div>
<div class="a " style="left:8px;top:732px;width:1873px;height:144px;border:1px solid #8f7268;border-radius:2px 4px 3px 3px;background:#fff;box-shadow:inset -1px -1px 0 #d2c9c0;"></div>
<div class="a " style="left:12px;top:737px;width:1865px;height:19px;border:1px solid #8f7a6e;border-radius:4px 4px 0 0;background:linear-gradient(#f8f5ef,#eee8df 45%,#e6dfd4);"></div>
<div class="a " style="left:26px;top:738px;width:1px;height:18px;background:#b9aa9f;"></div>
<div class="a " style="left:95px;top:738px;width:1px;height:18px;background:#b9aa9f;"></div>
<div class="a " style="left:245px;top:738px;width:1px;height:18px;background:#b9aa9f;"></div>
<div class="a " style="left:295px;top:738px;width:1px;height:18px;background:#b9aa9f;"></div>
<div class="a " style="left:445px;top:738px;width:1px;height:18px;background:#b9aa9f;"></div>
<div class="a " style="left:595px;top:738px;width:1px;height:18px;background:#b9aa9f;"></div>
<div class="a " style="left:745px;top:738px;width:1px;height:18px;background:#b9aa9f;"></div>
<div class="a " style="left:895px;top:738px;width:1px;height:18px;background:#b9aa9f;"></div>
<div class="a " style="left:1045px;top:738px;width:1px;height:18px;background:#b9aa9f;"></div>
<div class="a " style="left:1195px;top:738px;width:1px;height:18px;background:#b9aa9f;"></div>
<div class="a " style="left:1270px;top:738px;width:1px;height:18px;background:#b9aa9f;"></div>
<div class="a " style="left:1420px;top:738px;width:1px;height:18px;background:#b9aa9f;"></div>
<div class="a " style="left:1495px;top:738px;width:1px;height:18px;background:#b9aa9f;"></div>
<div class="a " style="left:1595px;top:738px;width:1px;height:18px;background:#b9aa9f;"></div>
<div class="a " style="left:1645px;top:738px;width:1px;height:18px;background:#b9aa9f;"></div>
<div class="a t " style="left:30px;top:738px;">action</div>
<div class="a t " style="left:99px;top:738px;">Track title</div>
<div class="a t " style="left:252px;top:738px;">Perfo<span style="letter-spacing:1.6px">...</span></div>
<div class="a t " style="left:299px;top:738px;">Composer/Editor</div>
<div class="a t " style="left:449px;top:738px;">Lyricist/ Editor</div>
<div class="a t " style="left:599px;top:738px;">Artist/ Performer</div>
<div class="a t " style="left:749px;top:738px;">Arranger/ Editor</div>
<div class="a t " style="left:899px;top:738px;">Band</div>
<div class="a t " style="left:1049px;top:738px;">Album</div>
<div class="a t " style="left:1199px;top:738px;">Type of pe<span style="letter-spacing:1.6px">...</span></div>
<div class="a t " style="left:1274px;top:738px;">Type of phonogram**</div>
<div class="a t " style="left:1424px;top:738px;">Owner of t<span style="letter-spacing:1.6px">...</span></div>
<div class="a t " style="left:1499px;top:738px;">Country</div>
<div class="a t " style="left:1599px;top:738px;">Year</div>
<div class="a " style="left:12px;top:756px;width:14px;height:45px;background:linear-gradient(90deg,#f1ece5,#e7e0d6);border-left:1px solid #c0b1a6;border-right:1px solid #c0b1a6;"></div>
<div class="a t" style="left:14px;top:760px;color:#a09890;font-size:10px">&#10035;</div>
<div class="a t " style="left:26px;top:760px;width:1619px;text-align:center;color:#b8b0a8;">Click here to add a new row</div>
<div class="a " style="left:12px;top:777px;width:1633px;height:3px;border-top:1px solid #9e7f70;border-bottom:1px solid #9e7f70;background:#e9e2d9;"></div>
<div class="a " style="left:95px;top:780px;width:1550px;height:21px;background:#7b96df;"></div>
<div class="a " style="left:245px;top:780px;width:1px;height:21px;background:#c9d3ef;"></div>
<div class="a " style="left:295px;top:780px;width:1px;height:21px;background:#c9d3ef;"></div>
<div class="a " style="left:445px;top:780px;width:1px;height:21px;background:#c9d3ef;"></div>
<div class="a " style="left:595px;top:780px;width:1px;height:21px;background:#c9d3ef;"></div>
<div class="a " style="left:745px;top:780px;width:1px;height:21px;background:#c9d3ef;"></div>
<div class="a " style="left:895px;top:780px;width:1px;height:21px;background:#c9d3ef;"></div>
<div class="a " style="left:1045px;top:780px;width:1px;height:21px;background:#c9d3ef;"></div>
<div class="a " style="left:1195px;top:780px;width:1px;height:21px;background:#c9d3ef;"></div>
<div class="a " style="left:1270px;top:780px;width:1px;height:21px;background:#c9d3ef;"></div>
<div class="a " style="left:1420px;top:780px;width:1px;height:21px;background:#c9d3ef;"></div>
<div class="a " style="left:1495px;top:780px;width:1px;height:21px;background:#c9d3ef;"></div>
<div class="a " style="left:1595px;top:780px;width:1px;height:21px;background:#c9d3ef;"></div>
<div class="a " style="left:1645px;top:780px;width:1px;height:21px;background:#c9d3ef;"></div>
<svg class="a" style="left:16px;top:786px" width="5" height="9"><path d="M.5 .5 L4.5 4.5 L.5 8.5Z" fill="#5a4a42"/></svg>
<div class="a " style="left:29px;top:783px;width:64px;height:16px;border:1px solid #a3958b;border-radius:2px;background:linear-gradient(#f7f3ee,#e7e0d6);"></div>
<div class="a t " style="left:29px;top:784px;width:64px;text-align:center;color:#8a827c;">delete</div>
<div class="a t " style="left:99px;top:784px;color:#fff;">THE CAVEMEN</div>
<div class="a t" style="left:245px;top:784px;width:47px;text-align:right;color:#fff">29</div>
<div class="a t " style="left:299px;top:784px;color:#fff;">Klaus Lehr</div>
<div class="a t " style="left:1499px;top:784px;color:#fff;">Germany</div>
<div class="a t" style="left:1595px;top:784px;width:47px;text-align:right;color:#fff">2017</div>
<div class="a " style="left:4px;top:1012px;width:1887px;height:8px;background:linear-gradient(#e9e3d9,#f3efe8 50%,#e4ddd1);border-top:1px solid #8c6e5f;"></div>
<svg class="a" style="left:943px;top:1014px" width="9" height="5"><path d="M.5 4.5 L4.5 .5 L8.5 4.5" fill="none" stroke="#8a7a70"/></svg>
<div class="a " style="left:4px;top:1020px;width:121px;height:30px;background:#f6f2ee;"></div>
<div class="a " style="left:13px;top:1016px;width:107px;height:21px;border:1px solid #9e8c80;border-top:none;border-radius:0 0 6px 6px;background:linear-gradient(#f3eee7,#e5ddd2);"></div>
<svg class="a" style="left:17px;top:1020px" width="16" height="13" viewBox="0 0 16 13"><path d="M1 2 H15 V12 H1Z" fill="#f2e270" stroke="#c8a820"/><path d="M6 4 L12 4 L12 10 Z" fill="#3ac040" opacity=".8"/></svg>
<div class="a t " style="left:46px;top:1017px;">open txt file</div>
<div class="a " style="left:125px;top:1020px;width:1557px;height:30px;background:#fff;border-left:1px solid #e2dbd3;"></div>
<div class="a " style="left:1683px;top:1021px;width:208px;height:29px;border:1px solid #a49284;background:linear-gradient(#f8f5f1,#e9e1d5);"></div>
<div class="a " style="left:0px;top:1050px;width:1920px;height:1px;background:#8c6e5f;"></div>
<div class="a " style="left:0px;top:1051px;width:1920px;height:4px;background:#eae6de;"></div>
<div class="a " style="left:0px;top:1055px;width:1920px;height:1px;background:#8c6e5f;"></div>
<div class="a " style="left:0px;top:1056px;width:1920px;height:24px;background:linear-gradient(#f7f3ed,#ede6da 60%,#e7dfd1);border-bottom:1px solid #3a3030;"></div>
<svg class="a" style="left:4px;top:1058px" width="18" height="19" viewBox="0 0 18 19"><circle cx="6" cy="5" r="3.2" fill="#c0803a"/><circle cx="12" cy="6" r="3.2" fill="#6a9a3a"/><path d="M1 16 Q6 8 11 16Z" fill="#c03a3a"/><path d="M7 18 Q12 9 17 18Z" fill="#3a7ac0"/></svg>
<div class="a t " style="left:25px;top:1060px;letter-spacing:-0.6px;">LAUR</div>
<div class="a" style="left:55px;top:1064px"><svg width="7" height="5"><path d="M.5 .5 L3.5 3.5 L6.5 .5" fill="none" stroke="#6b5a50"/></svg></div>
<div class="a t " style="left:71px;top:1060px;">[172.16.12.107]</div>
<div class="a " style="left:1652px;top:1057px;width:1px;height:22px;background:#c8bcb0;"></div>
<div class="a t " style="left:1659px;top:1060px;">CwoD</div>
<div class="a " style="left:1692px;top:1060px;width:1px;height:16px;background:#d3c8bc;"></div>
<div class="a t " style="left:1696px;top:1060px;">en-US</div>
<div class="a " style="left:1730px;top:1060px;width:1px;height:16px;background:#d3c8bc;"></div>
<svg class="a" style="left:1734px;top:1058px" width="18" height="19" viewBox="0 0 18 19"><rect x="5" y="2" width="12" height="13" fill="#eef2f8" stroke="#6a7a9a"/><circle cx="6" cy="7" r="3.5" fill="#4a3020"/><path d="M0 18 Q6 9 12 18Z" fill="#3a6ab0"/></svg>
<div class="a t " style="left:1758px;top:1060px;color:#1414e6;font-weight:bold;font-size:11.6px;">0 changes have occurred.</div>
<div class="a" style="left:1905px;top:1064px"><svg width="7" height="5"><path d="M.5 .5 L3.5 3.5 L6.5 .5" fill="none" stroke="#6b5a50"/></svg></div>
</body></html>
